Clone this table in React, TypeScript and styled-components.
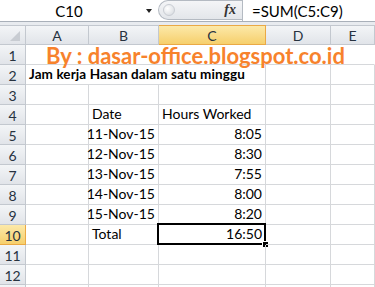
import React from 'react';
import styled, { createGlobalStyle, css } from 'styled-components';

const GlobalStyle = createGlobalStyle`
  html, body {
    margin: 0;
    padding: 0;
    background: #ffffff;
    overflow: hidden;
  }
  body {
    font-family: Lato, "Open Sans", sans-serif;
  }
`;

const Window = styled.div`
  width: 375px;
  height: 287px;
  overflow: hidden;
  background: #ffffff;
`;

const FormulaBar = styled.div`
  display: flex;
  height: 21px;
  background: #ffffff;
  border-bottom: 1px solid #a9b0b9;
`;

const NameBox = styled.div`
  position: relative;
  width: 158px;
  display: flex;
  align-items: center;
  justify-content: center;
  padding-right: 20px;
  box-sizing: border-box;
  font-size: 15px;
  color: #000;
`;

const DropArrow = styled.span`
  position: absolute;
  right: 6px;
  top: 9px;
  width: 0;
  height: 0;
  border-left: 3.5px solid transparent;
  border-right: 3.5px solid transparent;
  border-top: 4px solid #222;
`;

const Splitter = styled.div`
  display: flex;
  align-items: center;
  justify-content: space-between;
  width: 84px;
  height: 20px;
  box-sizing: border-box;
  border: 1px solid #b4bac2;
  border-right: none;
  border-radius: 10px 0 0 10px;
  background: linear-gradient(#f4f5f7, #e3e6ea);
  padding: 0 6px 0 4px;
`;

const Knob = styled.span`
  width: 10px;
  height: 10px;
  border-radius: 50%;
  background: radial-gradient(circle at 35% 35%, #ffffff, #d3d7dc);
  border: 1px solid #c9cdd3;
`;

const FxLabel = styled.span`
  font-family: "Liberation Serif", serif;
  font-style: italic;
  font-weight: bold;
  font-size: 14px;
  color: #333;
`;

const FormulaInput = styled.div`
  flex: 1;
  display: flex;
  align-items: center;
  padding-left: 9px;
  border-left: 1px solid #b4bac2;
  font-size: 15px;
  color: #000;
`;

const Gap = styled.div`
  height: 3px;
  background: #e8ebef;
`;

const Sheet = styled.div`
  display: grid;
  grid-template-columns: 26px 63px 70px 107px 65px 1fr;
  grid-auto-rows: 20px;
  font-size: 14px;
  color: #000;
`;

const headerLook = css<{ $active?: boolean }>`
  background: ${({ $active }) =>
    $active ? 'linear-gradient(#fce9a9, #f6cf6c)' : 'linear-gradient(#f3f5f7, #e1e4e9)'};
  border-right: 1px solid ${({ $active }) => ($active ? '#eaa945' : '#c3c8cf')};
  border-bottom: 1px solid ${({ $active }) => ($active ? '#eaa945' : '#c3c8cf')};
  color: #27323f;
  display: flex;
  align-items: center;
  justify-content: center;
  box-sizing: border-box;
  font-size: 14px;
`;

const Corner = styled.div`
  position: relative;
  ${headerLook};
  border-top: 1px solid #c3c8cf;
`;

const CornerMark = styled.span`
  position: absolute;
  right: 5px;
  bottom: 3px;
  width: 0;
  height: 0;
  border-left: 10px solid transparent;
  border-bottom: 10px solid #c8ccd2;
`;

const ColHead = styled.div<{ $active?: boolean }>`
  ${headerLook};
  border-top: 1px solid ${({ $active }) => ($active ? '#eaa945' : '#c3c8cf')};
`;

const RowHead = styled.div<{ $active?: boolean }>`
  ${headerLook};
  padding-top: 2px;
`;

const Cell = styled.div<{ $span?: number; $align?: 'left' | 'right'; $open?: boolean }>`
  grid-column: span ${({ $span }) => $span ?? 1};
  box-sizing: border-box;
  border-right: 1px solid ${({ $open }) => ($open ? 'transparent' : '#d6d8db')};
  border-bottom: 1px solid #d6d8db;
  display: flex;
  align-items: flex-end;
  justify-content: ${({ $align }) => ($align === 'right' ? 'flex-end' : 'flex-start')};
  padding: 0 3px 1px 3px;
  white-space: nowrap;
  line-height: 18px;
  position: relative;
`;

const Title = styled.span`
  font-size: 22px;
  font-weight: bold;
  color: #f7822c;
  padding-left: 17px;
  line-height: 18px;
  margin-bottom: -2px;
`;

const Bold = styled.span`
  font-weight: bold;
  font-size: 13.5px;
  letter-spacing: 0.1px;
`;

const Selected = styled.span`
  position: absolute;
  left: -2px;
  top: -2px;
  right: -1px;
  bottom: -1px;
  border: 2px solid #000;
  pointer-events: none;
`;

const FillHandle = styled.span`
  position: absolute;
  right: -4px;
  bottom: -4px;
  width: 5px;
  height: 5px;
  background: #000;
  border: 1px solid #fff;
`;

const cols = ['A', 'B', 'C', 'D', 'E'];

const days = [
  { date: '11-Nov-15', hours: '8:05' },
  { date: '12-Nov-15', hours: '8:30' },
  { date: '13-Nov-15', hours: '7:55' },
  { date: '14-Nov-15', hours: '8:00' },
  { date: '15-Nov-15', hours: '8:20' },
];

const App = () => {
  return (
    <Window>
      <GlobalStyle />
      <FormulaBar>
        <NameBox>
          C10
          <DropArrow />
        </NameBox>
        <Splitter>
          <Knob />
          <FxLabel>fx</FxLabel>
        </Splitter>
        <FormulaInput>=SUM(C5:C9)</FormulaInput>
      </FormulaBar>
      <Gap />
      <Sheet>
        <Corner>
          <CornerMark />
        </Corner>
        {cols.map((c) => (
          <ColHead key={c} $active={c === 'C'}>{c}</ColHead>
        ))}

        <RowHead>1</RowHead>
        <Cell $span={5} $open>
          <Title>By : dasar-office.blogspot.co.id</Title>
        </Cell>

        <RowHead>2</RowHead>
        <Cell $span={3}>
          <Bold>Jam kerja Hasan dalam satu minggu</Bold>
        </Cell>
        <Cell />
        <Cell />

        <RowHead>3</RowHead>
        <Cell /><Cell /><Cell /><Cell /><Cell />

        <RowHead>4</RowHead>
        <Cell />
        <Cell>Date</Cell>
        <Cell>Hours Worked</Cell>
        <Cell /><Cell />

        {days.map((d, i) => (
          <React.Fragment key={d.date}>
            <RowHead>{i + 5}</RowHead>
            <Cell />
            <Cell $align="right">{d.date}</Cell>
            <Cell $align="right">{d.hours}</Cell>
            <Cell /><Cell />
          </React.Fragment>
        ))}

        <RowHead $active>10</RowHead>
        <Cell />
        <Cell>Total</Cell>
        <Cell $align="right">
          16:50
          <Selected />
          <FillHandle />
        </Cell>
        <Cell /><Cell />

        {[11, 12, 13].map((n) => (
          <React.Fragment key={n}>
            <RowHead>{n}</RowHead>
            <Cell /><Cell /><Cell /><Cell /><Cell />
          </React.Fragment>
        ))}
      </Sheet>
    </Window>
  );
};

export default App;
